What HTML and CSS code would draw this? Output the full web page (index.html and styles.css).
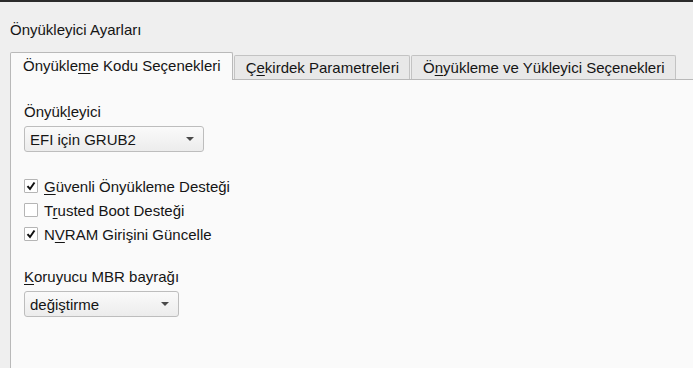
FILE: index.html
```html
<!DOCTYPE html>
<html lang="tr">
<head>
  <meta charset="UTF-8">
  <title>Önyükleyici Ayarları</title>
  <link rel="stylesheet" href="styles.css">
</head>
<body>
  <div class="topline"></div>
  <h1 class="title">Önyükleyici Ayarları</h1>

  <div class="tabs">
    <div class="tab active">Önyükle<u>m</u>e Kodu Seçenekleri</div>
    <div class="tab">Ç<u>e</u>kirdek Parametreleri</div>
    <div class="tab">Ö<u>n</u>yükleme ve Yükleyici Seçenekleri</div>
  </div>

  <div class="panel">
    <label class="field-label">Önyük<u>l</u>eyici</label>
    <div class="combo wide">
      <span>EFI için GRUB2</span>
      <span class="arrow"></span>
    </div>

    <div class="checks">
      <div class="check">
        <span class="box"><svg viewBox="0 0 12 12"><path d="M2.5 6.2 L5 9 L9.5 2.5" /></svg></span>
        <span><u>G</u>üvenli Önyükleme Desteği</span>
      </div>
      <div class="check">
        <span class="box"></span>
        <span>T<u>r</u>usted Boot Desteği</span>
      </div>
      <div class="check">
        <span class="box"><svg viewBox="0 0 12 12"><path d="M2.5 6.2 L5 9 L9.5 2.5" /></svg></span>
        <span>N<u>V</u>RAM Girişini Güncelle</span>
      </div>
    </div>

    <label class="field-label"><u>K</u>oruyucu MBR bayrağı</label>
    <div class="combo narrow">
      <span>değiştirme</span>
      <span class="arrow"></span>
    </div>
  </div>
</body>
</html>
```

FILE: styles.css
```css
html, body {
  margin: 0;
  padding: 0;
  height: 100%;
}
body {
  font-family: "Liberation Sans", Arial, sans-serif;
  font-size: 15px;
  color: #151515;
  background-color: #efefef;
  display: flex;
  flex-direction: column;
  overflow: hidden;
}
u {
  text-decoration-thickness: 1px;
  text-underline-offset: 2px;
}
.topline {
  height: 2px;
  background-color: #2b2b2b;
}
.title {
  font-size: 15px;
  font-weight: normal;
  margin: 19px 0 0 10px;
  line-height: 18px;
}
.tabs {
  display: flex;
  align-items: flex-end;
  margin: 13px 0 0 10px;
  position: relative;
  z-index: 1;
}
.tab {
  height: 23px;
  line-height: 23px;
  padding: 0 10px 0 11px;
  background-color: #e8e8e8;
  border: 1px solid #c3c3c3;
  border-bottom: none;
  border-radius: 2px 2px 0 0;
  margin-left: 1px;
}
.tab.active {
  height: 27px;
  line-height: 26px;
  padding: 0 11px 0 12px;
  margin-left: 0;
  background-color: #fafafa;
  border-color: #b9b9b9;
  margin-bottom: -1px;
}
.panel {
  flex: 1;
  margin-left: 10px;
  background-color: #fafafa;
  border-top: 1px solid #b9b9b9;
  border-left: 1px solid #b9b9b9;
  padding: 23px 0 0 13px;
}
.field-label {
  display: block;
  line-height: 18px;
}
.combo {
  margin-top: 5px;
  height: 24px;
  border: 1px solid #bdbdbd;
  border-radius: 3px;
  background: linear-gradient(#fafafa, #ececec);
  display: flex;
  align-items: center;
  justify-content: space-between;
  padding: 0 9px 0 5px;
}
.combo.wide { width: 164px; }
.combo.narrow { width: 139px; }
.arrow {
  width: 0;
  height: 0;
  border-left: 4px solid transparent;
  border-right: 4px solid transparent;
  border-top: 4px solid #4a4a4a;
}
.checks {
  margin: 25px 0 25px 0;
  display: flex;
  flex-direction: column;
  gap: 6px;
}
.check {
  display: flex;
  align-items: center;
  gap: 6px;
  height: 18px;
}
.box {
  width: 12px;
  height: 12px;
  border: 1px solid #b5b5b5;
  background-color: #ffffff;
  border-radius: 1px;
}
.box svg {
  display: block;
  width: 12px;
  height: 12px;
  fill: none;
  stroke: #111;
  stroke-width: 2;
}
```
